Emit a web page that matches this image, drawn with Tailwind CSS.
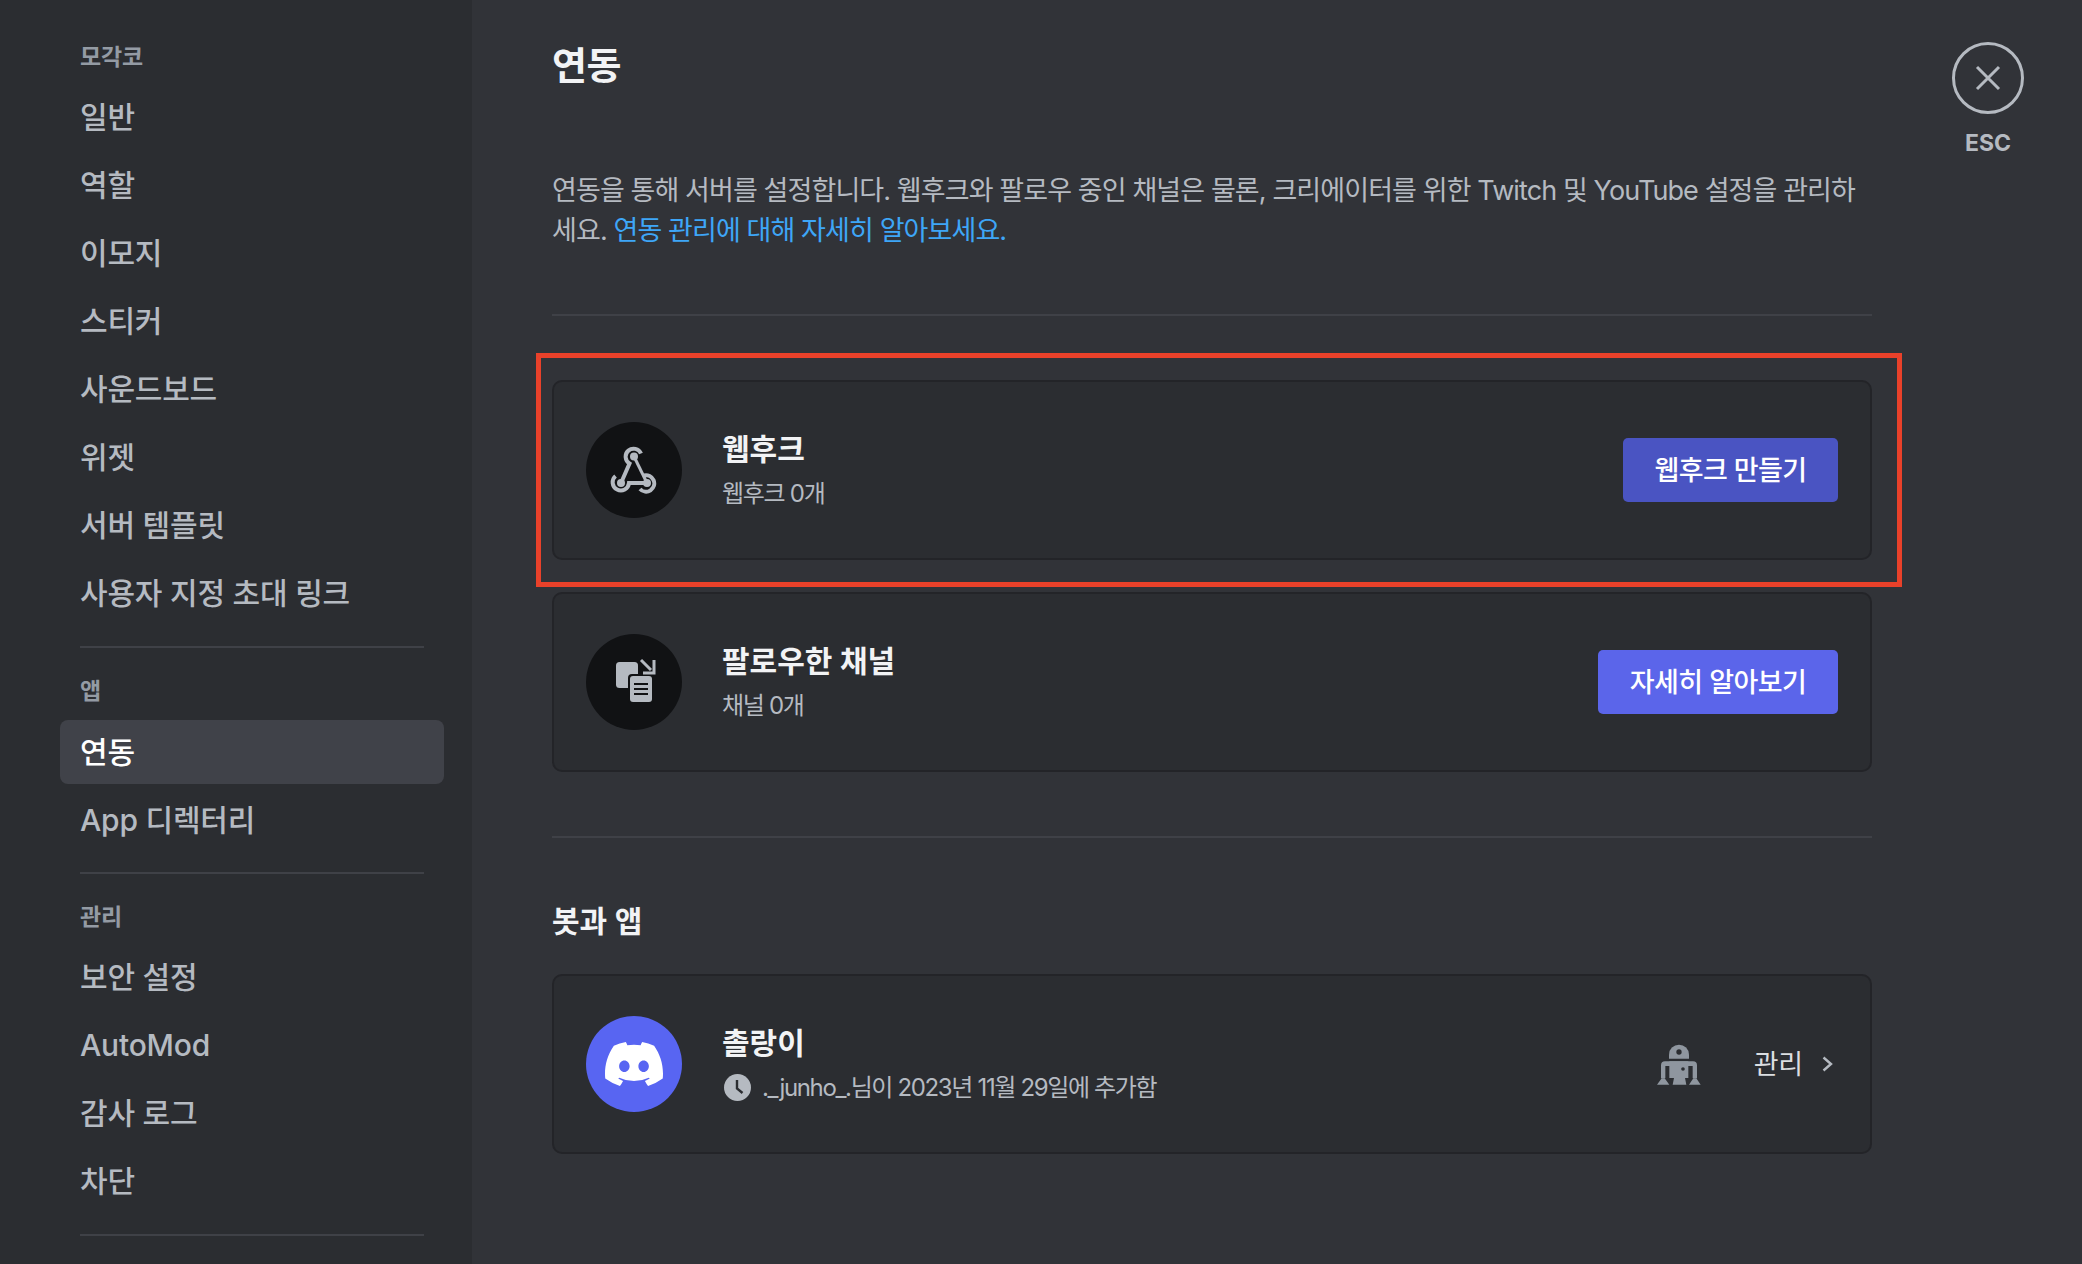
<!DOCTYPE html>
<html lang="ko">
<head>
  <meta charset="UTF-8">
  <title>연동</title>
  <script src="https://cdn.jsdelivr.net/npm/@tailwindcss/browser@4"></script>
</head>
<body class="bg-[#313338] font-['Inter','Noto_Sans_CJK_KR',sans-serif] overflow-hidden">

  <div class="relative flex h-[1264px] w-[2082px] overflow-hidden">

    <!-- Sidebar -->
    <nav class="w-[472px] shrink-0 bg-[#2b2d31] pt-[41px] pl-[60px] pr-[28px] text-[30px] tracking-[-0.2px] font-medium text-[#b5bac1]">
      <h3 class="h-[32px] mb-[12px] px-[20px] flex items-center text-[23px] font-bold text-[#949ba4]">모각코</h3>
      <a class="h-[64px] mb-[4px] pl-[20px] pt-[1px] flex items-center">일반</a>
      <a class="h-[64px] mb-[4px] pl-[20px] pt-[1px] flex items-center">역할</a>
      <a class="h-[64px] mb-[4px] pl-[20px] pt-[1px] flex items-center">이모지</a>
      <a class="h-[64px] mb-[4px] pl-[20px] pt-[1px] flex items-center">스티커</a>
      <a class="h-[64px] mb-[4px] pl-[20px] pt-[1px] flex items-center">사운드보드</a>
      <a class="h-[64px] mb-[4px] pl-[20px] pt-[1px] flex items-center">위젯</a>
      <a class="h-[64px] mb-[4px] pl-[20px] pt-[1px] flex items-center">서버 템플릿</a>
      <a class="h-[64px] mb-[4px] pl-[20px] pt-[1px] flex items-center">사용자 지정 초대 링크</a>
      <div class="h-[2px] mt-[21px] mx-[20px] bg-[#3f4147]"></div>

      <h3 class="h-[32px] mt-[27px] mb-[13px] px-[20px] flex items-center text-[23px] font-bold text-[#949ba4]">앱</h3>
      <a class="h-[64px] mb-[4px] pl-[20px] flex items-center rounded-[8px] bg-[#404249] text-white">연동</a>
      <a class="h-[64px] mb-[4px] pl-[20px] flex items-center">App 디렉터리</a>
      <div class="h-[2px] mt-[20px] mx-[20px] bg-[#3f4147]"></div>

      <h3 class="h-[32px] mt-[27px] mb-[12px] px-[20px] flex items-center text-[23px] font-bold text-[#949ba4]">관리</h3>
      <a class="h-[64px] mb-[4px] pl-[20px] pt-[1px] flex items-center">보안 설정</a>
      <a class="h-[64px] mb-[4px] pl-[20px] pt-[1px] flex items-center">AutoMod</a>
      <a class="h-[64px] mb-[4px] pl-[20px] pt-[1px] flex items-center">감사 로그</a>
      <a class="h-[64px] mb-[4px] pl-[20px] pt-[1px] flex items-center">차단</a>
      <div class="h-[2px] mt-[21px] mx-[20px] bg-[#3f4147]"></div>
    </nav>

    <!-- Main content -->
    <main class="w-[1320px] ml-[80px] shrink-0 pt-[41px]">
      <h1 class="h-[48px] flex items-center text-[38px] tracking-[-0.5px] font-semibold text-[#f2f3f5]">연동</h1>
      <p class="mt-[81px] pt-[1px] text-[27px] leading-[40px] tracking-[-0.9px] text-[#b5bac1] whitespace-nowrap">
        연동을 통해 서버를 설정합니다. 웹후크와 팔로우 중인 채널은 물론, 크리에이터를 위한 Twitch 및 YouTube 설정을 관리하<br>
        세요. <a class="text-[#3ea6f7]">연동 관리에 대해 자세히 알아보세요.</a>
      </p>
      <div class="h-[2px] mt-[63px] bg-[#3f4147]"></div>

      <!-- Webhooks -->
      <section class="h-[180px] mt-[64px] px-[32px] flex items-center rounded-[10px] border-2 border-[#232428] bg-[#2b2d31]">
        <div class="size-[96px] shrink-0 rounded-full bg-[#111214] flex items-center justify-center">
          <svg width="48" height="48" viewBox="0 0 48 48" fill="none" stroke="#b5bac1" stroke-width="4">
            <path d="M31 7.5A8 8 0 1 0 19.5 17.5L11 37"/>
            <path d="M5.5 30A8.2 8.2 0 1 0 19 37H37"/>
            <path d="M24 10.5L37 37" stroke-width="3"/>
            <path d="M34 29.5A8.2 8.2 0 1 1 30 43"/>
            <circle cx="24" cy="10.5" r="4" fill="#b5bac1" stroke="none"/>
            <circle cx="11" cy="37" r="4" fill="#b5bac1" stroke="none"/>
            <circle cx="37" cy="37" r="4" fill="#b5bac1" stroke="none"/>
          </svg>
        </div>
        <div class="ml-[40px] flex-1">
          <div class="h-[40px] pt-[1px] flex items-center text-[30px] font-semibold text-[#f2f3f5]">웹후크</div>
          <div class="h-[36px] mt-[7px] flex items-center text-[24px] tracking-[-1.3px] text-[#b5bac1]">웹후크 0개</div>
        </div>
        <button class="h-[64px] w-[215px] rounded-[5px] bg-[#4a54c2] pt-[3px] text-[27px] tracking-[-0.6px] font-medium text-white">웹후크 만들기</button>
      </section>

      <!-- Followed channels -->
      <section class="h-[180px] mt-[32px] px-[32px] flex items-center rounded-[10px] border-2 border-[#232428] bg-[#2b2d31]">
        <div class="size-[96px] shrink-0 rounded-full bg-[#111214] flex items-center justify-center">
          <svg width="48" height="48" viewBox="0 0 48 48" fill="none">
            <rect x="6" y="4" width="22" height="26" rx="3.5" fill="#b5bac1"/>
            <rect x="18" y="16" width="26" height="30" rx="4" fill="#111214"/>
            <rect x="20" y="18" width="22" height="26" rx="3" fill="#b5bac1"/>
            <path d="M24 26H38M24 31H38M24 36H38" stroke="#111214" stroke-width="2"/>
            <path d="M31 2L41 12" stroke="#b5bac1" stroke-width="3"/>
            <path d="M44 2V15H33" stroke="#b5bac1" stroke-width="3"/>
          </svg>
        </div>
        <div class="ml-[40px] flex-1">
          <div class="h-[40px] pt-[1px] flex items-center text-[30px] font-semibold text-[#f2f3f5]">팔로우한 채널</div>
          <div class="h-[36px] mt-[7px] flex items-center text-[24px] tracking-[-1.3px] text-[#b5bac1]">채널 0개</div>
        </div>
        <button class="h-[64px] w-[240px] rounded-[5px] bg-[#5b65ea] pt-[3px] text-[27px] tracking-[-0.6px] font-medium text-white">자세히 알아보기</button>
      </section>

      <div class="h-[2px] mt-[64px] bg-[#3f4147]"></div>

      <h2 class="h-[40px] mt-[63px] mb-[33px] pt-[1px] flex items-center text-[30px] font-semibold text-[#f2f3f5]">봇과 앱</h2>

      <!-- Bot row -->
      <section class="h-[180px] px-[32px] flex items-center rounded-[10px] border-2 border-[#232428] bg-[#2b2d31]">
        <div class="size-[96px] shrink-0 rounded-full bg-[#5865f2] flex items-center justify-center">
          <svg width="58" height="44" viewBox="0 0 127.14 96.36" fill="#fff">
            <path d="M107.7,8.07A105.15,105.15,0,0,0,81.47,0a72.06,72.06,0,0,0-3.36,6.83A97.68,97.68,0,0,0,49,6.83,72.37,72.37,0,0,0,45.64,0,105.89,105.89,0,0,0,19.39,8.09C2.79,32.65-1.71,56.6.54,80.21h0A105.73,105.73,0,0,0,32.71,96.36,77.7,77.7,0,0,0,39.6,85.25a68.42,68.42,0,0,1-10.85-5.18c.91-.66,1.8-1.34,2.66-2a75.57,75.57,0,0,0,64.32,0c.87.71,1.76,1.39,2.66,2a68.68,68.68,0,0,1-10.87,5.19,77,77,0,0,0,6.89,11.1A105.25,105.25,0,0,0,126.6,80.22h0C129.24,52.84,122.09,29.11,107.7,8.07ZM42.45,65.69C36.18,65.69,31,60,31,53s5-12.74,11.43-12.74S54,46,53.89,53,48.84,65.69,42.45,65.69Zm42.24,0C78.41,65.69,73.25,60,73.25,53s5-12.74,11.44-12.74S96.23,46,96.12,53,91.08,65.69,84.69,65.69Z"/>
          </svg>
        </div>
        <div class="ml-[40px] flex-1">
          <div class="h-[40px] pt-[1px] flex items-center text-[30px] font-semibold text-[#f2f3f5]">촐랑이</div>
          <div class="h-[36px] mt-[7px] flex items-center text-[24px] tracking-[-1.35px] text-[#b5bac1]">
            <svg class="mr-[11px] ml-[2px]" width="27" height="27" viewBox="0 0 27 27">
              <circle cx="13.5" cy="13.5" r="13.5" fill="#b5bac1"/>
              <path d="M13 6V14.5L18.5 19" fill="none" stroke="#2b2d31" stroke-width="2.4"/>
            </svg>
            ._junho_.님이 2023년 11월 29일에 추가함
          </div>
        </div>
        <svg class="mr-[53px]" width="44" height="42" viewBox="0 0 132 126" fill="#8f969f">
          <path d="M36 47V35A30 30 0 0 1 96 35V47Z"/>
          <circle cx="66" cy="27" r="8" fill="#2b2d31"/>
          <path d="M12 106V67Q12 55 24 55H108Q120 55 120 67V106H107V69H25V106Z"/>
          <path d="M37 55H94V105H84L88 125H47L51 105H37Z"/>
          <circle cx="78" cy="78" r="5.5" fill="#2b2d31"/>
          <path d="M0 125L14 106H23L37 125ZM96 125L109 106H118L131 125Z"/>
        </svg>
        <span class="pt-[2px] text-[27px] tracking-[-0.2px] text-[#dbdee1]">관리</span>
        <svg class="ml-[19px] mr-[5px]" width="11" height="16" viewBox="0 0 11 16" fill="none" stroke="#b5bac1" stroke-width="2.4">
          <path d="M1.5 1.5L9 8L1.5 14.5"/>
        </svg>
      </section>
    </main>

    <!-- Close -->
    <div class="ml-[80px] pt-[42px] w-[72px] shrink-0 flex flex-col items-center">
      <div class="size-[72px] rounded-full border-[3px] border-[#b5bac1] flex items-center justify-center">
        <svg width="26" height="26" viewBox="0 0 26 26" fill="none" stroke="#b5bac1" stroke-width="3">
          <path d="M2 2L24 24M24 2L2 24"/>
        </svg>
      </div>
      <div class="mt-[14px] text-[23px] leading-[30px] font-bold text-[#b5bac1]">ESC</div>
    </div>

    <!-- Red annotation box from the screenshot -->
    <div class="absolute left-[536px] top-[353px] w-[1366px] h-[234px] border-[5px] border-[#e9412a]"></div>
  </div>

</body>
</html>
